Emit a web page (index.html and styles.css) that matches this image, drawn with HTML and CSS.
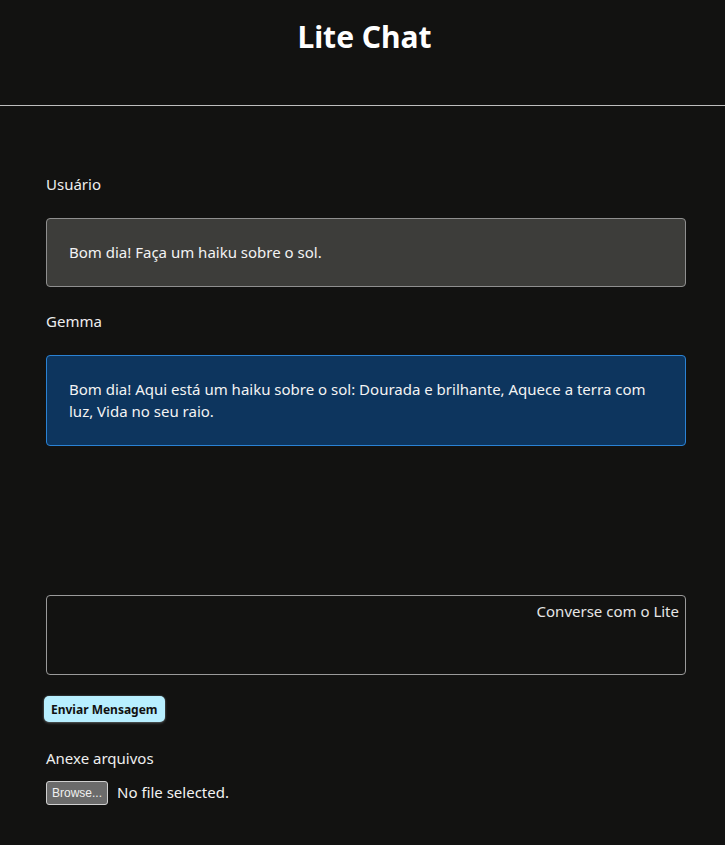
FILE: index.html
```html
<!DOCTYPE html>
<html lang="pt">
<head>
<meta charset="utf-8">
<title>Lite Chat</title>
<link rel="stylesheet" href="styles.css">
</head>
<body>
<header class="header">
  <h1 class="title">Lite Chat</h1>
</header>
<main class="main">
  <section class="messages">
    <div class="message">
      <div class="label">Usuário</div>
      <div class="bubble bubble-user">Bom dia! Faça um haiku sobre o sol.</div>
    </div>
    <div class="message">
      <div class="label">Gemma</div>
      <div class="bubble bubble-bot">Bom dia! Aqui está um haiku sobre o sol: Dourada e brilhante, Aquece a terra com luz, Vida no seu raio.</div>
    </div>
  </section>
  <form class="composer">
    <textarea class="input" placeholder="Converse com o Lite"></textarea>
    <div class="actions"><button type="button" class="send">Enviar Mensagem</button></div>
    <div class="attach-label">Anexe arquivos</div>
    <div class="file">
      <span class="browse">Browse...</span>
      <span class="file-status">No file selected.</span>
    </div>
  </form>
</main>
</body>
</html>
```

FILE: styles.css
```css
* { box-sizing: border-box; }
html, body { margin: 0; padding: 0; }
body {
  background: #121211;
  color: #f2f2f2;
  font-family: "Noto Sans", "Open Sans", sans-serif;
  font-size: 15px;
  line-height: 22.5px;
}
.header {
  height: 106px;
  border-bottom: 1px solid #bdbdbd;
  display: flex;
  justify-content: center;
  padding-left: 4px;
}
.title {
  margin: 16px 0 0;
  font-size: 30px;
  line-height: 42px;
  font-weight: 700;
  color: #ffffff;
}
.main {
  padding: 67px 39px 0 46px;
}
.messages {
  display: flex;
  flex-direction: column;
  gap: 22.5px;
  min-height: 422px;
}
.label {
  margin-bottom: 22.5px;
  color: #eeeeee;
}
.bubble {
  border-radius: 4px;
  padding: 22px 22px 22.5px;
  color: #f3f3f3;
}
.bubble-user {
  background: #3d3d3a;
  border: 1px solid #8f8f8f;
}
.bubble-bot {
  background: #0d355e;
  border: 1px solid #2a82d4;
}
.composer {
  display: flex;
  flex-direction: column;
}
.input {
  display: block;
  width: 100%;
  height: 80px;
  background: #121211;
  border: 1px solid #9a9a9a;
  border-radius: 4px;
  resize: none;
  font-family: inherit;
  font-size: 15px;
  line-height: 22px;
  padding: 4px 6px;
  text-align: right;
  color: #eee;
}
.input::placeholder { color: #e6e6e6; opacity: 1; }
.actions { margin-top: 21px; margin-left: -2px; }
.send {
  background: #b8efff;
  color: #111;
  border: none;
  border-radius: 5px;
  height: 26px;
  padding: 0 7px;
  font-family: "Noto Sans", sans-serif;
  font-weight: 700;
  font-size: 12px;
  box-shadow: 0 1px 3px rgba(255,255,255,0.25), 0 0 2px rgba(180,230,255,0.35);
  cursor: pointer;
}
.attach-label {
  margin-top: 25px;
  color: #eeeeee;
}
.file {
  margin-top: 11px;
  display: flex;
  align-items: center;
  gap: 9px;
}
.browse {
  display: inline-block;
  background: #6b6b6b;
  border: 1px solid #cfcfcf;
  border-radius: 3px;
  color: #f0f0f0;
  font-size: 12px;
  line-height: 18px;
  padding: 2px 5px;
  font-family: "Liberation Sans", sans-serif;
}
.file-status { color: #f2f2f2; }
```
